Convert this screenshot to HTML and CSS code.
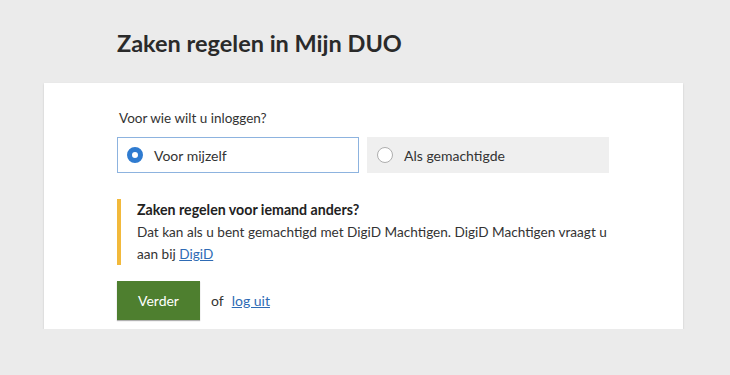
FILE: index.html
```html
<!DOCTYPE html>
<html lang="nl">
<head>
    <meta charset="UTF-8">
    <meta name="viewport" content="width=device-width, initial-scale=1.0">
    <title>Mijn DUO</title>
    <link rel="stylesheet" href="styles.css">
</head>
<body>
    <div class="page">
        <h1 class="page-title">Zaken regelen in Mijn DUO</h1>
        <form class="login-card">
            <p class="question">Voor wie wilt u inloggen?</p>
            <div class="choices">
                <label class="choice choice-selected">
                    <span class="radio radio-checked"></span>
                    Voor mijzelf
                </label>
                <label class="choice">
                    <span class="radio"></span>
                    Als gemachtigde
                </label>
            </div>
            <div class="notice">
                <strong class="notice-title">Zaken regelen voor iemand anders?</strong>
                <p class="notice-text">Dat kan als u bent gemachtigd met DigiD Machtigen. DigiD Machtigen vraagt u aan bij <a href="#">DigiD</a></p>
            </div>
            <div class="actions">
                <button type="button" class="btn-next">Verder</button>
                <span class="or">of</span>
                <a href="#" class="logout">log uit</a>
            </div>
        </form>
    </div>
</body>
</html>
```

FILE: styles.css
```css
body {
    font-family: Lato, 'Open Sans', sans-serif;
    background-color: #ebebeb;
    color: #333;
    margin: 0;
    padding: 0;
}
.page {
    padding: 28px 47px 0 44px;
}
.page-title {
    font-size: 23.5px;
    font-weight: 700;
    color: #2a2a2a;
    margin: 0 0 25px 73px;
    line-height: 30px;
}
.login-card {
    background-color: #fff;
    box-shadow: 0 1px 2px rgba(0, 0, 0, 0.15);
    padding: 25px 73px 9px 73px;
}
.question {
    margin: 0 0 9px 2px;
    font-size: 13.5px;
    line-height: 20px;
}
.choices {
    display: flex;
    gap: 8px;
}
.choice {
    width: 242px;
    height: 36px;
    box-sizing: border-box;
    display: flex;
    align-items: center;
    padding-left: 10px;
    background-color: #efefef;
    font-size: 14px;
    color: #333;
}
.choice-selected {
    background-color: #fff;
    border: 1px solid #8db3df;
    padding-left: 9px;
}
.radio {
    width: 16px;
    height: 16px;
    border-radius: 50%;
    border: 1px solid #aeaeae;
    background-color: #fff;
    box-sizing: border-box;
    margin-right: 11px;
}
.radio-checked {
    border: 5.5px solid #2f7bd0;
}
.notice {
    margin-top: 26px;
    border-left: 4px solid #f2b93b;
    padding: 0 0 0 16px;
    font-size: 13.6px;
    line-height: 22px;
}
.notice-title {
    display: block;
    font-size: 14.2px;
    font-weight: 700;
    color: #222;
}
.notice-text {
    margin: 0;
}
.notice-text a,
.logout {
    color: #2e6bb5;
}
.actions {
    margin-top: 16px;
    display: flex;
    align-items: center;
    font-size: 14px;
}
.btn-next {
    width: 83px;
    height: 39px;
    border: none;
    background-color: #4e7f2f;
    color: #fff;
    font-family: inherit;
    font-size: 14px;
    box-shadow: 0 1px 1px rgba(0, 0, 0, 0.3);
    cursor: pointer;
}
.or {
    margin: 0 8px 0 11px;
}
```
